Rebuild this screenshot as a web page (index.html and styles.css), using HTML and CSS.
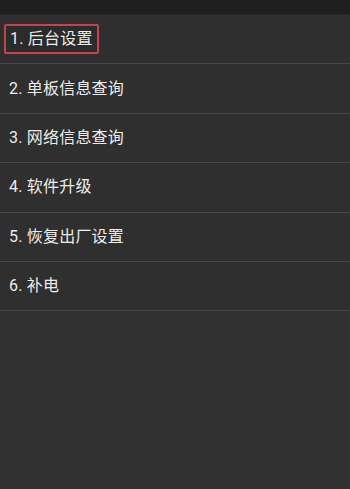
FILE: index.html
```html
<!DOCTYPE html>
<html lang="zh">
<head>
<meta charset="utf-8">
<link rel="stylesheet" href="styles.css">
</head>
<body>
<div class="topbar"></div>
<ul class="menu">
  <li class="item"><span class="label selected">1. 后台设置</span></li>
  <li class="item"><span class="label">2. 单板信息查询</span></li>
  <li class="item"><span class="label">3. 网络信息查询</span></li>
  <li class="item"><span class="label">4. 软件升级</span></li>
  <li class="item"><span class="label">5. 恢复出厂设置</span></li>
  <li class="item"><span class="label">6. 补电</span></li>
</ul>
</body>
</html>
```
FILE: styles.css
```css
html, body {
  margin: 0;
  padding: 0;
  height: 100%;
}
body {
  background: #303030;
  font-family: Roboto, "Noto Sans CJK SC", sans-serif;
  color: #ececec;
}
.topbar {
  height: 14px;
  background: #1e1e1e;
  border-bottom: 1px solid #262626;
}
.menu {
  list-style: none;
  margin: 0;
  padding: 0;
}
.item {
  height: 48.4px;
  border-bottom: 1px solid #474747;
  display: flex;
  align-items: center;
  padding-left: 9px;
  box-sizing: content-box;
  background: #2f2f2f;
}
.label {
  font-size: 16px;
  line-height: 20px;
  letter-spacing: 0.2px;
}
.selected {
  margin-left: -5px;
  padding: 3px 4px 3px 4px;
  border: 2px solid #c4434c;
  border-radius: 2px;
  background: #2b2b2b;
}
```
